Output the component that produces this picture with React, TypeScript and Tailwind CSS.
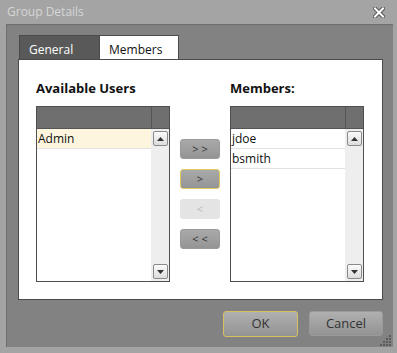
import React from 'react';

const font = "font-['Segoe_UI','Open_Sans','Noto_Sans',sans-serif]";

function ScrollArrow({ up }: { up?: boolean }) {
    return (
        <div className="w-[15px] h-[15px] rounded-[2px] border border-[#8a8a8a] bg-gradient-to-b from-[#fbfbfb] to-[#dcdcdc] flex items-center justify-center">
            <svg width="7" height="4" viewBox="0 0 7 4">
                {up ? <path d="M0 4 L3.5 0 L7 4 Z" fill="#333" /> : <path d="M0 0 L7 0 L3.5 4 Z" fill="#333" />}
            </svg>
        </div>
    );
}

function ListBox({ items, selected }: { items: string[]; selected?: string }) {
    return (
        <div className="w-[134px] h-[176px] border border-[#4f4f4f] flex flex-col bg-white">
            <div className="h-[22px] flex bg-[#6f6f6f] border-b border-[#555]">
                <div className="flex-1" />
                <div className="w-[18px] border-l border-[#555]" />
            </div>
            <div className="flex-1 flex">
                <div className="flex-1 flex flex-col">
                    {items.map(it => (
                        <div
                            key={it}
                            className={`h-[20px] border-b border-[#e2e2e2] text-[12px] leading-[19px] text-[#111] pl-[1px] ${it === selected ? 'bg-[#fdf5dd]' : ''}`}
                        >
                            {it}
                        </div>
                    ))}
                </div>
                <div className="w-[18px] bg-[#eeeeee] flex flex-col items-center justify-between py-[2px]">
                    <ScrollArrow up />
                    <ScrollArrow />
                </div>
            </div>
        </div>
    );
}

function MoveButton({ label, focused, disabled }: { label: string; focused?: boolean; disabled?: boolean }) {
    const base = 'w-[40px] h-[20px] rounded-[3px] text-[11px] flex items-center justify-center';
    if (disabled) return <div className={`${base} bg-[#e4e4e4] text-[#bbb]`}>{label}</div>;
    return (
        <div className={`${base} bg-gradient-to-b from-[#a9a9a9] to-[#959595] text-[#333] border ${focused ? 'border-[#e0c860]' : 'border-[#9a9a9a]'}`}>
            {label}
        </div>
    );
}

export default function App() {
    return (
        <div className={`w-[397px] h-[353px] bg-[#a4a4a4] flex flex-col ${font}`}>
            {/* title bar */}
            <div className="h-[24px] flex items-center justify-between pl-[7px] pr-[12px]">
                <span className="text-[12px] text-[#d6d6d6]">Group Details</span>
                <svg width="12" height="11" viewBox="0 0 12 11">
                    <path d="M2 1.5 L10 9.5 M10 1.5 L2 9.5" stroke="#555" strokeWidth="4" strokeLinecap="square" />
                    <path d="M2 1.5 L10 9.5 M10 1.5 L2 9.5" stroke="#fff" strokeWidth="2" strokeLinecap="square" />
                </svg>
            </div>

            {/* body */}
            <div className="relative ml-[6px] mr-[4px] mb-[6px] flex-1 bg-[#828282] border-t border-l border-[#6e6e6e] pl-[11px] pr-[10px] pt-[10px] flex flex-col">
                <div className="flex h-[24px] pl-[1px]">
                    <div className="w-[80px] bg-[#595959] border-t border-l border-[#4a4a4a] text-white text-[12px] pl-[9px] pt-[5px]">General</div>
                    <div className="w-[80px] bg-white border-t border-x border-[#4a4a4a] text-[#111] text-[12px] pl-[9px] pt-[5px]">Members</div>
                </div>
                <div className="h-[241px] bg-white border border-[#4a4a4a] flex px-[17px] pt-[20px]">
                    <div className="flex flex-col">
                        <div className="h-[16px] text-[13px] leading-[16px] font-bold text-[#111] mb-[10px]">Available Users</div>
                        <ListBox items={['Admin']} selected="Admin" />
                    </div>
                    <div className="flex flex-col gap-[10px] mx-[10px] pt-[59px]">
                        <MoveButton label="> >" />
                        <MoveButton label=">" focused />
                        <MoveButton label="<" disabled />
                        <MoveButton label="< <" />
                    </div>
                    <div className="flex flex-col">
                        <div className="h-[16px] text-[13px] leading-[16px] font-bold text-[#111] mb-[10px]">Members:</div>
                        <ListBox items={['jdoe', 'bsmith']} />
                    </div>
                </div>
                <div className="flex justify-end gap-[11px] mt-[11px]">
                    <div className="w-[75px] h-[26px] rounded-[3px] border border-[#d8c060] bg-gradient-to-b from-[#b0b0b0] to-[#939393] text-[#333] text-[13px] flex items-center justify-center">OK</div>
                    <div className="w-[74px] h-[25px] rounded-[3px] border border-[#9a9a9a] bg-gradient-to-b from-[#b0b0b0] to-[#939393] text-[#333] text-[13px] flex items-center justify-center">Cancel</div>
                </div>
                {/* resize grip */}
                <svg className="absolute right-[1px] bottom-[1px]" width="12" height="12" viewBox="0 0 12 12">
                    {[[9, 1], [6, 4], [9, 4], [3, 7], [6, 7], [9, 7], [0, 10], [3, 10], [6, 10], [9, 10]].map(([x, y]) => (
                        <rect key={`${x}-${y}`} x={x} y={y} width="2" height="2" fill="#5a5a5a" />
                    ))}
                </svg>
            </div>
        </div>
    );
}
